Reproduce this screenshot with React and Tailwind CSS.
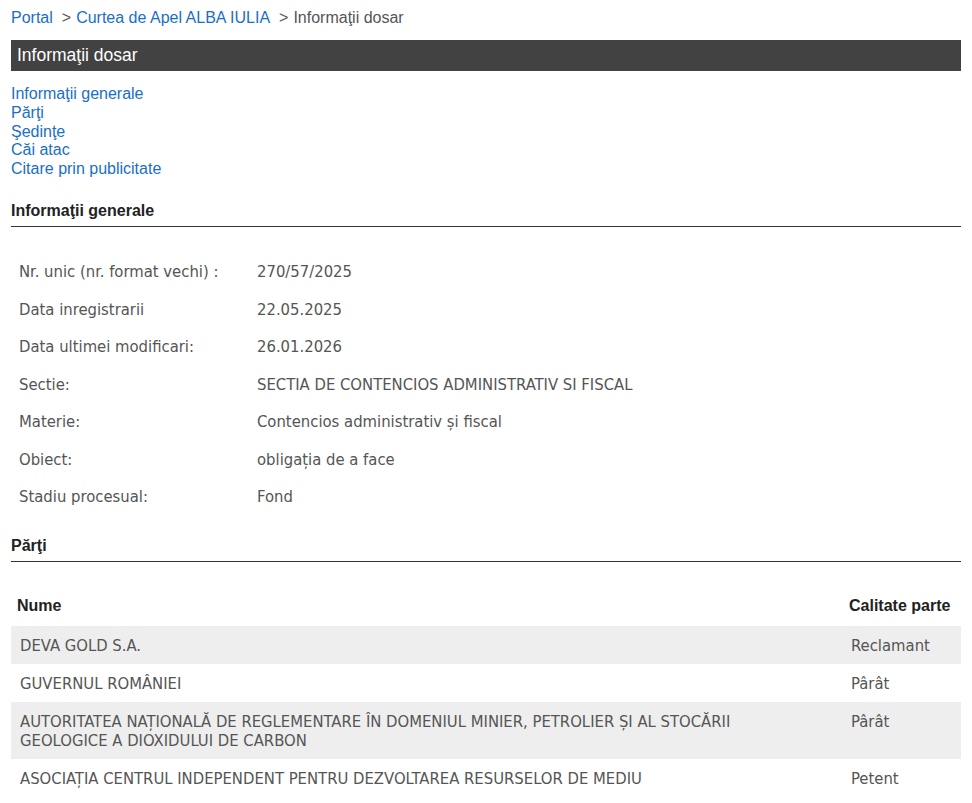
const info = [
  ['Nr. unic (nr. format vechi) :', '270/57/2025'],
  ['Data inregistrarii', '22.05.2025'],
  ['Data ultimei modificari:', '26.01.2026'],
  ['Sectie:', 'SECTIA DE CONTENCIOS ADMINISTRATIV SI FISCAL'],
  ['Materie:', 'Contencios administrativ și fiscal'],
  ['Obiect:', 'obligația de a face'],
  ['Stadiu procesual:', 'Fond'],
]

const parti = [
  ['DEVA GOLD S.A.', 'Reclamant'],
  ['GUVERNUL ROMÂNIEI', 'Pârât'],
  ['AUTORITATEA NAȚIONALĂ DE REGLEMENTARE ÎN DOMENIUL MINIER, PETROLIER ȘI AL STOCĂRII GEOLOGICE A DIOXIDULUI DE CARBON', 'Pârât'],
  ['ASOCIAȚIA CENTRUL INDEPENDENT PENTRU DEZVOLTAREA RESURSELOR DE MEDIU', 'Petent'],
]

const arial = "font-['Liberation_Sans',Arial,sans-serif]"
const tahoma = "font-['DejaVu_Sans_Condensed','DejaVu_Sans',sans-serif]"

export default function App() {
  return (
    <div className={`${arial} bg-white w-[972px] min-h-[803px] px-[11px] pt-[9px] text-[16px]`}>
      {/* Breadcrumb */}
      <div className="leading-[18px] text-[#555] flex items-center">
        <a className="text-[#1a6fc6]">Portal</a>
        <span className="ml-[9px] mr-[5px]">&gt;</span>
        <a className="text-[#1a6fc6]">Curtea de Apel ALBA IULIA</a>
        <span className="ml-[9px] mr-[5px]">&gt;</span>
        <span>Informaţii dosar</span>
      </div>

      {/* Title bar */}
      <div className="mt-[13px] h-[31px] bg-[#424242] text-white text-[17.5px] flex items-center px-[6px]">
        Informaţii dosar
      </div>

      {/* Anchors */}
      <div className="mt-[14px] flex flex-col leading-[18.75px] text-[#1a6fc6]">
        <a>Informaţii generale</a>
        <a>Părţi</a>
        <a>Şedinţe</a>
        <a>Căi atac</a>
        <a>Citare prin publicitate</a>
      </div>

      {/* Informatii generale */}
      <h2 className="mt-[23px] font-bold text-[16px] leading-[18px] text-[#222] pb-[6px] border-b border-[#333]">
        Informaţii generale
      </h2>
      <div className={`${tahoma} mt-[27px] text-[16.5px] text-[#555]`}>
        {info.map(([k, v]) => (
          <div key={k} className="flex h-[37.5px] items-center">
            <div className="w-[246px] pl-[8px]">{k}</div>
            <div>{v}</div>
          </div>
        ))}
      </div>

      {/* Parti */}
      <h2 className="mt-[21px] font-bold text-[16px] leading-[18px] text-[#222] pb-[6px] border-b border-[#333]">
        Părţi
      </h2>
      <div className="mt-[21px]">
        <div className="flex h-[43px] pt-[2px] items-center font-bold text-[#222]">
          <div className="flex-1 pl-[6px]">Nume</div>
          <div className="w-[112px]">Calitate parte</div>
        </div>
        <div className={`${tahoma} text-[16.5px] text-[#555]`}>
          {parti.map(([n, c], i) => (
            <div key={n} className={`flex py-[9.5px] leading-[19px] ${i % 2 === 0 ? 'bg-[#eeeeee]' : ''}`}>
              <div className="w-[840px] pl-[9px] pr-[70px]">{n}</div>
              <div className="flex-1">{c}</div>
            </div>
          ))}
        </div>
      </div>
    </div>
  )
}
